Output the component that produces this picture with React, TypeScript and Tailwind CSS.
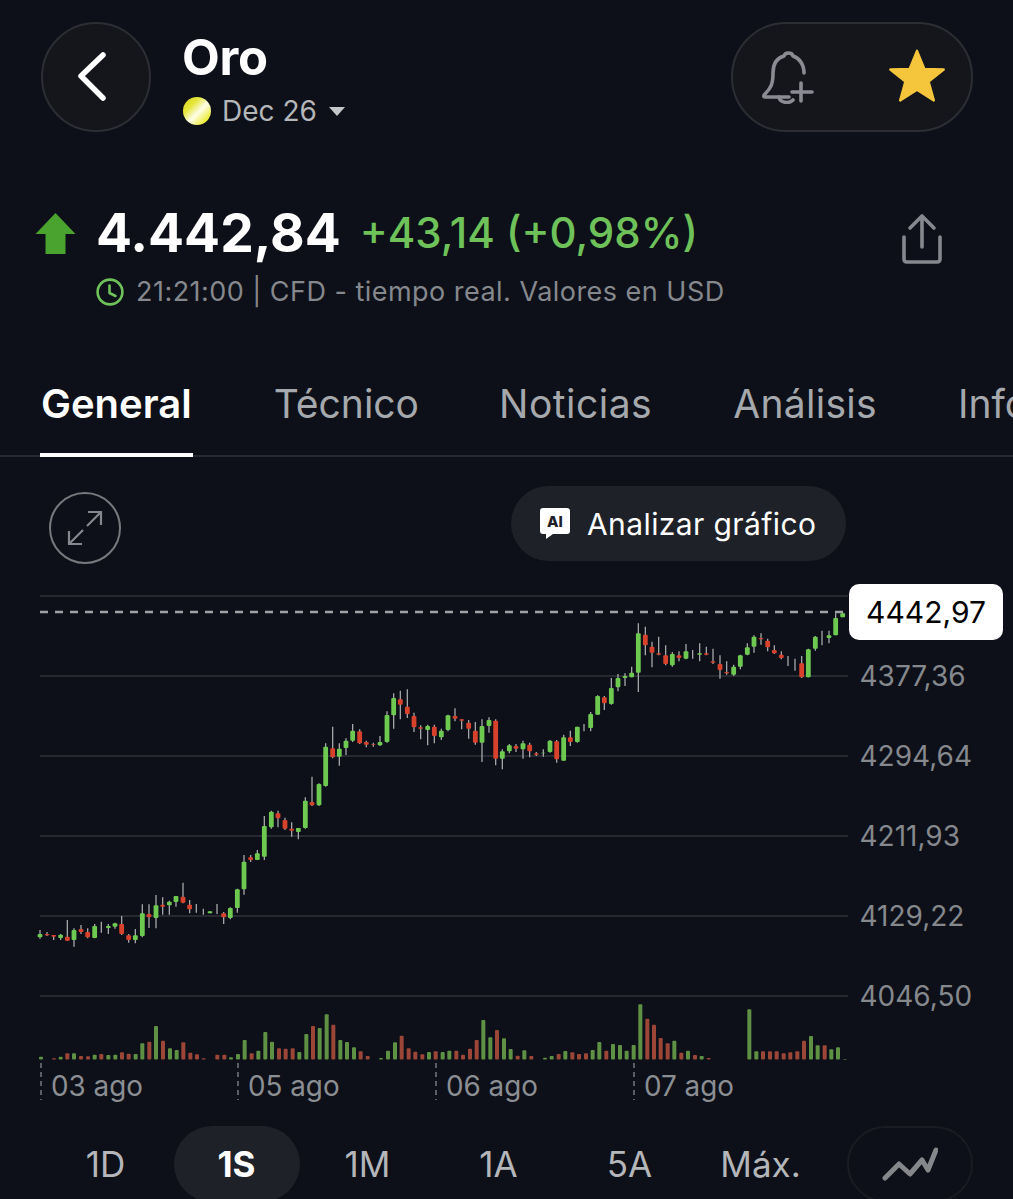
import React from "react";

type C = [number, number, number, number, number, "g" | "r"];

const groupA: C[] = [
  [30,210,222,232,236,"g"],[51,216,222,226,228,"r"],[71,225,225,230,240,"r"],[92,222,224,234,240,"g"],
  [112,180,230,242,243,"r"],[132,205,210,240,260,"g"],[153,195,207,216,222,"r"],[173,205,216,232,235,"r"],
  [194,192,198,234,235,"g"],[214,185,200,200,218,"g"],[235,192,198,204,222,"g"],[255,188,190,200,206,"g"],
  [275,168,192,222,225,"r"],[296,222,226,240,248,"r"],[316,207,226,240,250,"g"],[337,133,160,228,232,"g"],
  [357,133,162,172,204,"r"],[378,105,136,174,205,"g"],[398,112,134,140,164,"r"],[418,122,125,136,164,"g"],
  [438,108,108,126,140,"g"],[459,68,110,128,130,"r"],[479,120,134,148,160,"r"],[499,132,145,145,158,"r"],
  [520,146,155,155,164,"r"],[540,154,154,160,160,"g"],[561,132,150,150,162,"g"],[581,156,160,172,192,"r"],
  [601,142,144,174,178,"g"],[622,86,88,144,158,"g"],[642,-15,5,88,104,"g"],[662,-15,-8,0,6,"r"],[682,-30,-20,0,0,"g"],
];
const groupB: C[] = [
  [703,678,708,800,810,"g"],[724,662,665,712,716,"g"],[744,662,670,685,712,"r"],[765,683,690,716,720,"r"],
  [785,697,716,722,740,"r"],[805,714,714,726,748,"g"],[826,622,632,714,716,"g"],[846,560,636,646,648,"r"],
  [867,580,582,646,648,"g"],[887,460,470,588,590,"g"],[908,410,475,502,505,"r"],[928,460,476,500,527,"g"],
  [948,445,452,474,495,"g"],
];
const groupC: C[] = [
  [8,402,422,452,456,"g"],[29,418,424,460,462,"r"],[49,452,456,464,472,"r"],[70,458,462,464,470,"r"],
  [90,438,456,466,468,"g"],[111,364,375,456,458,"g"],[131,310,324,376,416,"g"],[151,302,328,344,388,"r"],
  [172,298,350,372,384,"r"],[192,368,378,412,426,"r"],[212,406,412,416,448,"r"],[233,404,408,420,466,"g"],
  [253,404,410,438,460,"r"],[274,416,422,442,450,"g"],[294,374,376,420,424,"g"],[315,355,378,386,394,"r"],
  [335,388,388,392,418,"r"],[356,390,398,416,446,"r"],[376,396,422,458,464,"r"],[396,388,408,458,516,"g"],
  [417,382,390,408,428,"g"],[437,388,392,506,526,"r"],[457,478,484,506,538,"g"],[478,462,466,484,490,"g"],
  [498,462,468,476,486,"r"],[519,452,460,478,506,"g"],[539,458,464,484,502,"r"],[559,486,490,494,498,"r"],
  [580,478,488,490,500,"g"],[600,450,452,486,488,"g"],[620,450,454,508,518,"r"],[641,434,442,512,512,"g"],
  [661,422,442,456,468,"r"],[682,410,410,456,458,"g"],[702,402,412,412,424,"g"],[722,366,372,414,424,"g"],
  [743,316,318,374,374,"g"],[763,318,322,340,360,"r"],[784,264,294,342,344,"g"],[804,252,264,292,304,"g"],
  [825,250,258,264,288,"g"],[845,230,248,262,262,"g"],[865,100,130,248,306,"g"],[886,110,134,166,196,"r"],
  [906,155,170,188,232,"r"],[926,140,190,194,196,"r"],[947,166,196,222,226,"r"],[967,186,192,226,230,"g"],
];
const groupD: C[] = [
  [237,184,196,204,214,"r"],[258,162,184,206,208,"g"],[278,180,193,193,206,"g"],[299,160,190,194,214,"g"],
  [319,170,190,194,196,"r"],[339,176,214,218,222,"r"],[360,196,222,240,266,"r"],[380,214,246,250,254,"r"],
  [401,224,230,254,258,"g"],[421,194,196,230,238,"g"],[442,160,172,194,196,"g"],[462,136,140,170,188,"g"],
  [483,130,144,148,164,"r"],[503,146,152,172,184,"r"],[523,166,180,190,192,"r"],[544,184,194,204,208,"r"],
  [564,198,212,212,228,"r"],[585,206,224,224,242,"r"],[605,198,220,262,264,"r"],[625,176,178,262,262,"g"],
  [646,138,140,176,182,"g"],[666,122,150,150,166,"r"],[687,122,136,144,160,"g"],[707,70,84,136,136,"g"],
  [728,68,70,82,82,"g"],
];

const candles = [
  ...groupA.map((c) => ({ c, ox: 30, oy: 860 })),
  ...groupB.map((c) => ({ c, ox: 30, oy: 590 })),
  ...groupC.map((c) => ({ c, ox: 350, oy: 590 })),
  ...groupD.map((c) => ({ c, ox: 600, oy: 590 })),
];

type V = [number, number, "g" | "r"];
const volA: V[] = [
  [33,200,"g"],[72,205,"r"],[92,200,"g"],[112,190,"r"],[132,190,"g"],[153,198,"r"],[174,199,"r"],[194,194,"g"],
  [214,192,"r"],[235,195,"g"],[256,194,"g"],[276,187,"r"],[296,191,"r"],[317,192,"g"],[337,160,"g"],[358,155,"r"],
  [378,108,"g"],[399,152,"r"],[420,175,"g"],[440,180,"g"],[460,157,"r"],[481,188,"r"],[501,193,"r"],[521,205,"r"],
  [562,194,"r"],[583,194,"r"],[603,202,"g"],[624,192,"g"],[644,150,"g"],[665,190,"r"],[685,182,"g"],[706,126,"g"],
  [726,155,"g"],[747,175,"r"],[767,176,"r"],[788,175,"r"],[808,186,"g"],[829,132,"g"],[849,108,"r"],[869,114,"g"],
  [890,73,"g"],[910,104,"r"],[931,150,"g"],[951,156,"g"],[972,172,"g"],[992,184,"r"],[1013,198,"r"],[1053,204,"g"],
  [1074,182,"g"],[1095,157,"g"],[1115,137,"r"],[1136,175,"r"],[1156,185,"r"],[1177,193,"r"],[1197,186,"g"],[1217,184,"r"],
];
const volB: V[] = [
  [8,186,"g"],[28,182,"g"],[49,182,"r"],[69,194,"r"],[90,176,"r"],[110,150,"r"],[130,90,"g"],[151,142,"g"],
  [171,120,"r"],[192,145,"g"],[212,177,"g"],[233,197,"r"],[253,181,"g"],[274,198,"r"],[315,203,"g"],[335,198,"g"],
  [356,192,"r"],[376,183,"g"],[397,187,"r"],[417,192,"r"],[438,190,"r"],[458,180,"g"],[478,156,"g"],[499,182,"r"],
  [519,162,"g"],[540,165,"g"],[560,182,"g"],[581,165,"g"],[601,43,"g"],[622,86,"r"],[642,104,"r"],[662,144,"r"],
  [683,160,"r"],[703,152,"g"],[724,188,"r"],[744,182,"g"],[765,195,"r"],[785,198,"g"],[806,204,"r"],[928,58,"g"],
  [949,184,"g"],[969,184,"r"],[990,184,"r"],[1010,184,"r"],[1031,190,"r"],[1051,187,"r"],[1072,184,"r"],[1092,152,"r"],
  [1113,138,"g"],[1133,166,"g"],[1154,166,"r"],[1174,178,"g"],[1194,172,"g"],[1215,207,"g"],
];
const volumes = [
  ...volA.map((v) => ({ v, ox: 30 })),
  ...volB.map((v) => ({ v, ox: 440 })),
];

function Chart() {
  return (
    <svg viewBox="0 580 1013 530" width={1013} height={530} className="block">
      {[596, 676, 756, 836, 916, 996].map((y) => (
        <line key={y} x1={40} x2={848} y1={y} y2={y} stroke="#272a30" strokeWidth={2} />
      ))}
      <line x1={40} x2={850} y1={612} y2={612} stroke="#a0a2a5" strokeWidth={2.4} strokeDasharray="8 7" />
      {candles.map(({ c, ox, oy }, i) => {
        const x = ox + c[0] / 3;
        const col = c[5] === "g" ? "#6dc94f" : "#d8412c";
        return (
          <g key={i}>
            <line x1={x} x2={x} y1={oy + c[1] / 3} y2={oy + c[4] / 3} stroke="#a6a8aa" strokeWidth={1.3} />
            {c[3] > c[2] && (
              <rect x={x - 2.4} width={4.8} y={oy + c[2] / 3} height={(c[3] - c[2]) / 3} rx={1} fill={col} />
            )}
          </g>
        );
      })}
      {volumes.map(({ v, ox }, i) => {
        const x = ox + v[0] / 3;
        const top = 990 + v[1] / 3;
        return (
          <rect
            key={i}
            x={x - 2}
            width={4}
            y={top}
            height={1059.5 - top}
            rx={1}
            fill={v[2] === "g" ? "#5f9145" : "#9c4638"}
          />
        );
      })}
      {[41, 238, 436, 634].map((x) => (
        <line key={x} x1={x} x2={x} y1={1063} y2={1100} stroke="#85888d" strokeWidth={1.3} strokeDasharray="5 4" />
      ))}
      {[
        ["03 ago", 51],
        ["05 ago", 248],
        ["06 ago", 446],
        ["07 ago", 644],
      ].map(([t, x]) => (
        <text key={t as string} x={x as number} y={1096} fontSize={27.8} fill="#8b8e93">
          {t}
        </text>
      ))}
      {[
        ["4377,36", 686],
        ["4294,64", 766],
        ["4211,93", 846],
        ["4129,22", 926],
        ["4046,50", 1006],
      ].map(([t, y]) => (
        <text key={t as string} x={859.5} y={y as number} fontSize={28} fill="#85888d">
          {t}
        </text>
      ))}
    </svg>
  );
}

const BellPlus = () => (
  <svg viewBox="0 0 54 54" width={54} height={54} fill="none" stroke="#8a8c92" strokeWidth={3.6} strokeLinecap="round" strokeLinejoin="round">
    <path d="M44 23c0-9-5-15-11-17-1-4-8-4-9 0C17 8 13 14 13 23c0 11-2 15-8 21-1 1-2 3 0 3h24" />
    <path d="M19 47c1 6 10 7 14 3" />
    <path d="M41 33v18M32 42h20" />
  </svg>
);

export default function App() {
  return (
    <div className="w-[1013px] h-[1199px] overflow-hidden bg-[#0d1018] font-['Inter',sans-serif] text-white flex flex-col">
      {/* Header */}
      <div className="flex items-start justify-between pt-[22px] pl-[41px] pr-[40px] h-[132px] shrink-0">
        <div className="flex items-start">
          <button className="w-[110px] h-[110px] rounded-full bg-[#14161c] border-2 border-[#2c2e34] flex items-center justify-center">
            <svg viewBox="0 0 40 60" width={40} height={60} fill="none" stroke="#ffffff" strokeWidth={5.5} strokeLinecap="round" strokeLinejoin="round" className="-ml-[6px]">
              <path d="M30 8L8 29l22 22" />
            </svg>
          </button>
          <div className="ml-[32px] flex flex-col">
            <div className="text-[49px] leading-[56px] font-bold tracking-[-0.3px] mt-[8px] -ml-[1px]">Oro</div>
            <div className="flex items-center mt-[9px]">
              <span className="w-[28px] h-[28px] rounded-full bg-[linear-gradient(135deg,#d4d416_0%,#e6e63c_30%,#fdfde8_55%,#ecec30_85%)]" />
              <span className="ml-[11px] text-[28px] leading-[32px] text-[#b4b6ba]">Dec 26</span>
              <span className="ml-[12px] w-0 h-0 border-l-[8px] border-r-[8px] border-t-[9px] border-l-transparent border-r-transparent border-t-[#c4c6c9]" />
            </div>
          </div>
        </div>
        <div className="w-[242px] h-[110px] rounded-full bg-[#14161c] border-2 border-[#2c2e34] flex items-center justify-between pl-[27px] pr-[25px]">
          <BellPlus />
          <svg viewBox="0 0 60 60" width={58} height={58} className="-mt-[4px]">
            <path d="M30 5l7.6 18.7 20 .6-15.6 12.4 5.4 19.6L30 45.2 12.6 56.3 18 36.7 2.4 24.3l20-.6z" fill="#f5c63c" stroke="#f5c63c" strokeWidth={2.5} strokeLinejoin="round" />
          </svg>
        </div>
      </div>

      {/* Price */}
      <div className="flex items-start justify-between pl-[35px] pr-[70px] pt-[71px] h-[204px] shrink-0">
        <div className="flex flex-col">
          <div className="flex items-center h-[60px]">
            <svg viewBox="0 0 40 41" width={41} height={41}>
              <path d="M20 0l20 21H30v20H10V21H0z" fill="#4aa32e" />
            </svg>
            <span className="ml-[20px] text-[53.3px] leading-[60px] font-bold">4.442,84</span>
            <span className="ml-[19px] text-[42px] leading-[60px] text-[#6fc25a] font-medium">+43,14 (+0,98%)</span>
          </div>
          <div className="flex items-center ml-[61px] mt-[13px]">
            <svg viewBox="0 0 28 28" width={28} height={28} fill="none" stroke="#6fc25a" strokeWidth={2.6} strokeLinecap="round" strokeLinejoin="round">
              <circle cx="14" cy="14" r="12.4" />
              <path d="M13.5 7.5V15l6 3" />
            </svg>
            <span className="ml-[12px] text-[27px] leading-[32px] text-[#85888d] tracking-[0.47px]">21:21:00 | CFD - tiempo real. Valores en USD</span>
          </div>
        </div>
        <svg viewBox="0 0 42 52" width={42} height={52} fill="none" stroke="#85888e" strokeWidth={3.6} strokeLinecap="round" strokeLinejoin="round" className="mt-[10px]">
          <path d="M21 34V3M9 15L21 3l12 12" />
          <path d="M3 24v22c0 2 1 3 3 3h30c2 0 3-1 3-3V24" />
        </svg>
      </div>

      {/* Tabs */}
      <div className="h-[121px] shrink-0 shadow-[inset_0_-2px_0_#26292f] overflow-hidden text-[39px] leading-[46px] text-[#a5a8ac] font-normal">
        <div className="flex pl-[41px] pt-[45px] gap-[82px] whitespace-nowrap">
          <span className="font-semibold text-white relative text-[40px]">
            General
            <span className="absolute left-[-1px] right-[-1px] top-[72px] h-[4px] bg-white" />
          </span>
          <span>Técnico</span>
          <span className="-ml-[2px] tracking-[0.5px]">Noticias</span>
          <span className="-ml-[1px] tracking-[0.3px]">Análisis</span>
          <span className="-ml-[1px]">Información</span>
        </div>
      </div>

      {/* Toolbar */}
      <div className="flex items-start justify-between pl-[49px] pr-[167px] pt-[29px] h-[123px] shrink-0">
        <button className="mt-[6px] w-[72px] h-[72px] rounded-full border-2 border-[#77797e] flex items-center justify-center">
          <svg viewBox="0 0 36 36" width={36} height={36} fill="none" stroke="#85888e" strokeWidth={2.2}>
            <path d="M21 2h13v13M34 2L20 16M2 21v13h13M2 34l14-14" />
          </svg>
        </button>
        <button className="w-[335px] h-[75px] rounded-full bg-[#1e2128] flex items-center pl-[29px]">
          <svg viewBox="0 0 30 32" width={30} height={32}>
            <path d="M3 0h24a3 3 0 0 1 3 3v20a3 3 0 0 1-3 3H13l-7 5v-5H3a3 3 0 0 1-3-3V3a3 3 0 0 1 3-3z" fill="#ffffff" />
            <text x="15" y="19" textAnchor="middle" fontSize="15" fontWeight="800" fill="#1e2128">AI</text>
          </svg>
          <span className="ml-[17px] text-[30px] leading-[36px] text-white tracking-[0.4px]">Analizar gráfico</span>
        </button>
      </div>

      {/* Chart */}
      <div className="relative h-[546px] shrink-0">
        <Chart />
        <div className="absolute left-[849px] top-[4px] w-[154px] h-[56px] rounded-[10px] bg-white flex items-center justify-center text-black text-[30px]">
          4442,97
        </div>
      </div>

      {/* Ranges */}
      <div className="flex items-center h-[76px] shrink-0 pl-[40px] text-[35px] text-[#b4b6ba]">
        <span className="w-[131px] text-center">1D</span>
        <span className="w-[131px] flex justify-center">
          <span className="w-[126px] h-[76px] rounded-full bg-[#1e2128] flex items-center justify-center text-white font-bold">1S</span>
        </span>
        <span className="w-[131px] text-center">1M</span>
        <span className="w-[131px] text-center">1A</span>
        <span className="w-[131px] text-center">5A</span>
        <span className="w-[131px] text-center">Máx.</span>
        <span className="ml-[21px] w-[126px] h-[76px] rounded-full border-2 border-[#191c22] flex items-center justify-center">
          <svg viewBox="0 0 56 36" width={56} height={36} fill="none" stroke="#85878b" strokeWidth={5} strokeLinecap="round" strokeLinejoin="round">
            <path d="M3 32l14-14 11 10 12-14 6 10L54 4" />
          </svg>
        </span>
      </div>
    </div>
  );
}
